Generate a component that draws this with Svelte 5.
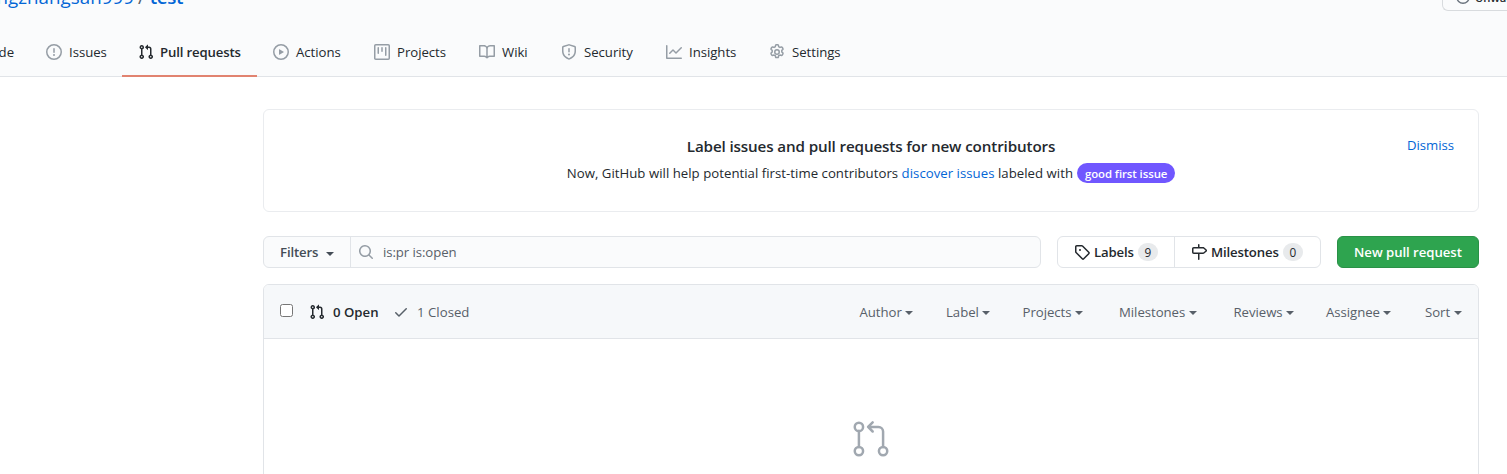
<script>
  const pr = 'M7.177 3.073L9.573.677A.25.25 0 0110 .854v4.792a.25.25 0 01-.427.177L7.177 3.427a.25.25 0 010-.354zM3.75 2.5a.75.75 0 100 1.5.75.75 0 000-1.5zm-2.25.75a2.25 2.25 0 113 2.122v5.256a2.251 2.251 0 11-1.5 0V5.372A2.25 2.25 0 011.5 3.25zM11 2.5h-1V4h1a1 1 0 011 1v5.628a2.251 2.251 0 101.5 0V5A2.5 2.5 0 0011 2.5zm1 10.25a.75.75 0 111.5 0 .75.75 0 01-1.5 0zM3.75 12a.75.75 0 100 1.5.75.75 0 000-1.5z';

  const tabs = [
    { label: 'Issues', width: 92, icon: 'M8 1.5a6.5 6.5 0 100 13 6.5 6.5 0 000-13zM0 8a8 8 0 1116 0A8 8 0 010 8zm9 3a1 1 0 11-2 0 1 1 0 012 0zm-.25-6.25a.75.75 0 00-1.5 0v3.5a.75.75 0 001.5 0v-3.5z' },
    { label: 'Pull requests', width: 135, active: true, icon: pr },
    { label: 'Actions', width: 101, icon: 'M1.5 8a6.5 6.5 0 1113 0 6.5 6.5 0 01-13 0zM8 0a8 8 0 100 16A8 8 0 008 0zM6.379 5.227A.25.25 0 006 5.442v5.117a.25.25 0 00.379.214l4.264-2.559a.25.25 0 000-.428L6.379 5.227z' },
    { label: 'Projects', width: 105, icon: 'M1.75 0A1.75 1.75 0 000 1.75v12.5C0 15.216.784 16 1.75 16h12.5A1.75 1.75 0 0016 14.25V1.75A1.75 1.75 0 0014.25 0H1.75zM1.5 1.75a.25.25 0 01.25-.25h12.5a.25.25 0 01.25.25v12.5a.25.25 0 01-.25.25H1.75a.25.25 0 01-.25-.25V1.75zM11.75 3a.75.75 0 00-.75.75v7.5a.75.75 0 001.5 0v-7.5a.75.75 0 00-.75-.75zm-8.25.75a.75.75 0 011.5 0v5.5a.75.75 0 01-1.5 0v-5.5zM8 3a.75.75 0 00-.75.75v3.5a.75.75 0 001.5 0v-3.5A.75.75 0 008 3z' },
    { label: 'Wiki', width: 82, icon: 'M0 1.75A.75.75 0 01.75 1h4.253c1.227 0 2.317.59 3 1.501A3.744 3.744 0 0111.006 1h4.245a.75.75 0 01.75.75v10.5a.75.75 0 01-.75.75h-4.507a2.25 2.25 0 00-1.591.659l-.622.621a.75.75 0 01-1.06 0l-.622-.621A2.25 2.25 0 005.258 13H.75a.75.75 0 01-.75-.75V1.75zm8.755 3a2.25 2.25 0 012.25-2.25H14.5v9h-3.757c-.71 0-1.4.201-1.992.572l.004-7.322zm-1.504 7.324l.004-5.073-.002-2.253A2.25 2.25 0 005.003 2.5H1.5v9h3.757a3.75 3.75 0 011.994.574z' },
    { label: 'Security', width: 105, icon: 'M7.467.133a1.75 1.75 0 011.066 0l5.25 1.68A1.75 1.75 0 0115 3.48V7c0 1.566-.32 3.182-1.303 4.682-.983 1.498-2.585 2.813-5.032 3.855a1.7 1.7 0 01-1.33 0c-2.447-1.042-4.049-2.357-5.032-3.855C1.32 10.182 1 8.566 1 7V3.48a1.75 1.75 0 011.217-1.667l5.25-1.68zm.61 1.429a.25.25 0 00-.153 0l-5.25 1.68a.25.25 0 00-.174.238V7c0 1.358.275 2.666 1.057 3.86.784 1.194 2.121 2.34 4.366 3.297a.2.2 0 00.154 0c2.245-.956 3.582-2.104 4.366-3.298C13.225 9.666 13.5 8.36 13.5 7V3.48a.25.25 0 00-.174-.237l-5.25-1.68zM9 10.5a1 1 0 11-2 0 1 1 0 012 0zm-.25-5.75a.75.75 0 10-1.5 0v3a.75.75 0 001.5 0v-3z' },
    { label: 'Insights', width: 103, icon: 'M1.5 1.75a.75.75 0 00-1.5 0v12.5c0 .414.336.75.75.75h14.5a.75.75 0 000-1.5H1.5V1.75zm14.28 2.53a.75.75 0 00-1.06-1.06L10 7.94 7.53 5.47a.75.75 0 00-1.06 0L3.22 8.72a.75.75 0 001.06 1.06L7 7.06l2.47 2.47a.75.75 0 001.06 0l5.25-5.25z' },
    { label: 'Settings', width: 105, gear: true }
  ];

  const menus = [
    { label: 'Author', width: 86.5 },
    { label: 'Label', width: 76.5 },
    { label: 'Projects', width: 96.5 },
    { label: 'Milestones', width: 114.5 },
    { label: 'Reviews', width: 92.5 },
    { label: 'Assignee', width: 99 },
    { label: 'Sort', width: 38 }
  ];
</script>

{#snippet icon(d)}
  <svg class="icon" viewBox="0 0 16 16" width="16" height="16"><path fill-rule="evenodd" {d} /></svg>
{/snippet}

<div class="page">
  <header>
    <div class="title-row">
      <div class="repo"><span class="owner">ngzhangsan999</span><span class="slash">/</span><b>test</b></div>
      <div class="watch">
        <svg class="icon" viewBox="0 0 16 16" width="14" height="14"><circle cx="8" cy="8" r="7.1" fill="none" stroke="currentColor" stroke-width="1.6" /></svg>
        <span>Unwatch</span>
      </div>
    </div>
    <nav>
      <div class="tab code"><span>Code</span></div>
      {#each tabs as t}
        <div class="tab" class:active={t.active} style:width="{t.width}px">
          {#if t.gear}
            <svg class="icon outline" viewBox="0 0 16 16" width="16" height="16">
              <circle cx="8" cy="8" r="2.25" />
              <path d="M7.3.8h1.4c.4 0 .6.2.7.6l.3 1.3c.5.2.9.4 1.3.7l1.3-.4c.4-.1.7 0 .9.3l.7 1.2c.2.4.1.7-.1 1l-1 .9v1.6l1 .9c.3.3.3.6.1 1l-.7 1.2c-.2.3-.5.4-.9.3l-1.3-.4c-.4.3-.8.5-1.3.7l-.3 1.3c-.1.4-.3.6-.7.6H7.300c-.4 0-.6-.2-.7-.6l-.3-1.3c-.5-.2-.9-.4-1.300-.7l-1.300.4c-.4.1-.7 0-.9-.3l-.7-1.200c-.2-.4-.1-.7.1-1l1-.9V6.400l-1-.9c-.3-.3-.3-.6-.1-1l.7-1.200c.2-.3.5-.4.9-.3l1.300.4c.4-.3.800-.5 1.300-.7l.3-1.300c.1-.4.3-.6.7-.6z" />
            </svg>
          {:else}
            {@render icon(t.icon)}
          {/if}
          <span>{t.label}</span>
        </div>
      {/each}
    </nav>
  </header>

  <main>
    <section class="notice">
      <span class="dismiss">Dismiss</span>
      <h2>Label issues and pull requests for new contributors</h2>
      <p><span>Now, GitHub will help potential first-time contributors <a href="#issues">discover issues</a> labeled with</span> <span class="pill">good first issue</span></p>
    </section>

    <div class="toolbar">
      <div class="search">
        <div class="filters"><span>Filters</span><i class="caret"></i></div>
        <div class="query">
          {@render icon('M11.5 7a4.499 4.499 0 11-8.998 0A4.499 4.499 0 0111.5 7zm-.82 4.74a6 6 0 111.06-1.06l3.04 3.04a.75.75 0 11-1.06 1.06l-3.04-3.04z')}
          <span>is:pr is:open</span>
        </div>
      </div>
      <div class="group">
        <div class="labels">
          {@render icon('M2.5 7.775V2.75a.25.25 0 01.25-.25h5.025a.25.25 0 01.177.073l6.25 6.25a.25.25 0 010 .354l-5.025 5.025a.25.25 0 01-.354 0l-6.25-6.25a.25.25 0 01-.073-.177zm-1.5 0V2.75C1 1.784 1.784 1 2.75 1h5.025c.464 0 .91.184 1.238.513l6.25 6.25a1.75 1.75 0 010 2.474l-5.026 5.026a1.75 1.75 0 01-2.474 0l-6.25-6.25A1.75 1.75 0 011 7.775zM6 5a1 1 0 100 2 1 1 0 000-2z')}
          <span>Labels</span><em>9</em>
        </div>
        <div class="miles">
          {@render icon('M7.75 0a.75.75 0 01.75.75V3h3.634c.414 0 .814.147 1.13.414l2.07 1.75a1.75 1.75 0 010 2.672l-2.07 1.75a1.75 1.75 0 01-1.13.414H8.5v5.25a.75.75 0 11-1.5 0V10H2.75A1.75 1.75 0 011 8.25v-3.5C1 3.784 1.784 3 2.75 3H7V.75A.75.75 0 017.75 0zm0 8.5h4.384a.25.25 0 00.161-.06l2.07-1.75a.25.25 0 000-.38l-2.07-1.75a.25.25 0 00-.161-.06H2.75a.25.25 0 00-.25.25v3.5c0 .138.112.25.25.25h5z')}
          <span>Milestones</span><em>0</em>
        </div>
      </div>
      <button>New pull request</button>
    </div>

    <section class="list">
      <div class="list-head">
        <input type="checkbox" aria-label="Select all" />
        <div class="open">{@render icon(pr)}<span>0 Open</span></div>
        <div class="closed">
          {@render icon('M13.78 4.22a.75.75 0 010 1.06l-7.25 7.25a.75.75 0 01-1.06 0L2.22 9.28a.75.75 0 011.06-1.06L6 10.94l6.72-6.72a.75.75 0 011.06 0z')}
          <span>1 Closed</span>
        </div>
        <div class="menus">
          {#each menus as m}
            <div class="menu" style:width="{m.width}px"><span>{m.label}</span><i class="caret"></i></div>
          {/each}
        </div>
      </div>
      <div class="blank">
        <svg viewBox="0 0 24 24" width="40" height="40">
          <circle cx="4.75" cy="4.75" r="2.5" /><circle cx="4.75" cy="19.25" r="2.5" /><circle cx="19.25" cy="19.25" r="2.5" />
          <path d="M4.75 7.25v9.5M19.25 16.75V7.5a2.75 2.75 0 00-2.75-2.75h-6M13 2l-2.75 2.75L13 7.5" />
        </svg>
      </div>
    </section>
  </main>
</div>

<style>
  :global(body) { overflow: hidden; background: #fff; }
  .page { width: 1507px; height: 474px; overflow: hidden; color: #24292e; font: 13.2px/20px "Open Sans", "Noto Sans", sans-serif; letter-spacing: -0.04px; white-space: nowrap; }
  .page * { box-sizing: border-box; }
  .icon { display: block; flex: none; fill: currentColor; }
  header { height: 77px; background: #fafbfc; border-bottom: 1px solid #e1e4e8; }
  .title-row { display: flex; justify-content: space-between; height: 28px; }
  .repo { display: flex; justify-content: flex-end; width: 183px; margin-top: -18px; font-size: 18.8px; line-height: 30px; color: #0366d6; letter-spacing: 0; }
  .slash { margin: 0 5px 0 4px; color: #586069; }
  .repo b { font-weight: 600; letter-spacing: -0.4px; }
  .watch { display: flex; gap: 5px; width: 65px; height: 28px; margin-top: -17px; padding: 7px 0 0 13px; border: 1px solid #d8dbde; border-right: 0; border-radius: 0 0 0 6px; font-size: 11.3px; font-weight: 600; line-height: 16px; overflow: hidden; }
  .watch .icon { color: #6a737d; margin-top: -1px; }
  .watch span { margin-top: -1px; }
  nav { display: flex; height: 49px; }
  .tab { display: flex; flex: none; align-items: center; gap: 7px; padding: 0 0 0 16px; height: 49px; border-bottom: 2px solid transparent; }
  .tab span { margin-top: 1px; }
  .tab .icon { color: #959da5; }
  .tab.code { width: 30px; justify-content: flex-end; padding: 0 16px 0 0; }
  .tab.active { gap: 6px; font-weight: 600; border-color: #e18370; letter-spacing: -0.15px; }
  .tab.active .icon { color: #24292e; }
  .icon.outline { fill: none; stroke: currentColor; stroke-width: 1.5; stroke-linejoin: round; }
  main { width: 1216px; margin: 32px 0 0 263px; }
  .notice { display: grid; justify-items: center; align-content: start; height: 103px; padding-top: 24px; border: 1px solid #eaecef; border-radius: 6px; position: relative; }
  .dismiss { position: absolute; right: 24px; top: 25px; color: #0366d6; }
  h2 { margin: 0; font-size: 15.2px; line-height: 24px; font-weight: 600; letter-spacing: -0.13px; }
  p { display: flex; align-items: center; gap: 4px; margin: 4px 0 0; line-height: 22px; letter-spacing: 0.03px; }
  a { color: #0366d6; text-decoration: none; }
  .pill { height: 20px; padding: 0 8px; border-radius: 10px; background: #7057ff; color: #fff; font-size: 11.4px; line-height: 21px; font-weight: 600; letter-spacing: -0.08px; }
  .toolbar { display: flex; gap: 16px; height: 32px; margin-top: 24px; }
  .search { display: flex; width: 778px; border: 1px solid #e1e4e8; border-radius: 6px; background: #fafbfc; overflow: hidden; }
  .filters { display: flex; align-items: center; width: 87px; padding-left: 16px; gap: 8px; border-right: 1px solid #e1e4e8; color: #444d56; font-weight: 600; letter-spacing: -0.14px; }
  .caret { width: 0; height: 0; border: 4px solid transparent; border-top-color: currentColor; border-bottom: 0; flex: none; margin-top: 3px; }
  .query { display: flex; align-items: center; gap: 9px; padding-left: 7px; color: #586069; letter-spacing: -0.08px; }
  .query .icon { color: #959da5; }
  .group { display: flex; width: 264px; border: 1px solid #e1e4e8; border-radius: 6px; font-weight: 600; letter-spacing: -0.15px; }
  .group > div { display: flex; align-items: center; gap: 4px; padding-left: 16px; }
  .labels { width: 117px; border-right: 1px solid #e1e4e8; }
  em { height: 18px; min-width: 20px; border-radius: 9px; background: #e8eaec; font-size: 11.8px; line-height: 18px; font-style: normal; font-weight: 500; text-align: center; }
  button { width: 142px; padding: 0; border: 1px solid #2a9147; border-radius: 6px; background: #2ea44f; color: #fff; font: inherit; font-weight: 600; letter-spacing: -0.05px; }
  .list { height: 300px; margin-top: 16px; border: 1px solid #e1e4e8; border-radius: 6px 6px 0 0; overflow: hidden; }
  .list-head { display: flex; align-items: center; height: 54px; padding-left: 16px; background: #f6f8fa; border-bottom: 1px solid #e1e4e8; }
  input { width: 13px; height: 13px; margin: -3px 0 0; }
  .open, .closed { display: flex; align-items: center; gap: 8px; }
  .open { width: 84px; margin-left: 16px; font-weight: 600; letter-spacing: 0; }
  .open .icon, .closed .icon { margin-top: 1px; }
  .closed { color: #586069; letter-spacing: 0.02px; }
  .menus { display: flex; margin-left: auto; padding-right: 15px; color: #586069; }
  .menu { display: flex; align-items: center; gap: 3.5px; flex: none; }
  .blank { display: flex; justify-content: center; padding-top: 80px; }
  .blank svg { fill: none; stroke: #a1a8b0; stroke-width: 1.5; stroke-linecap: round; stroke-linejoin: round; }
</style>
